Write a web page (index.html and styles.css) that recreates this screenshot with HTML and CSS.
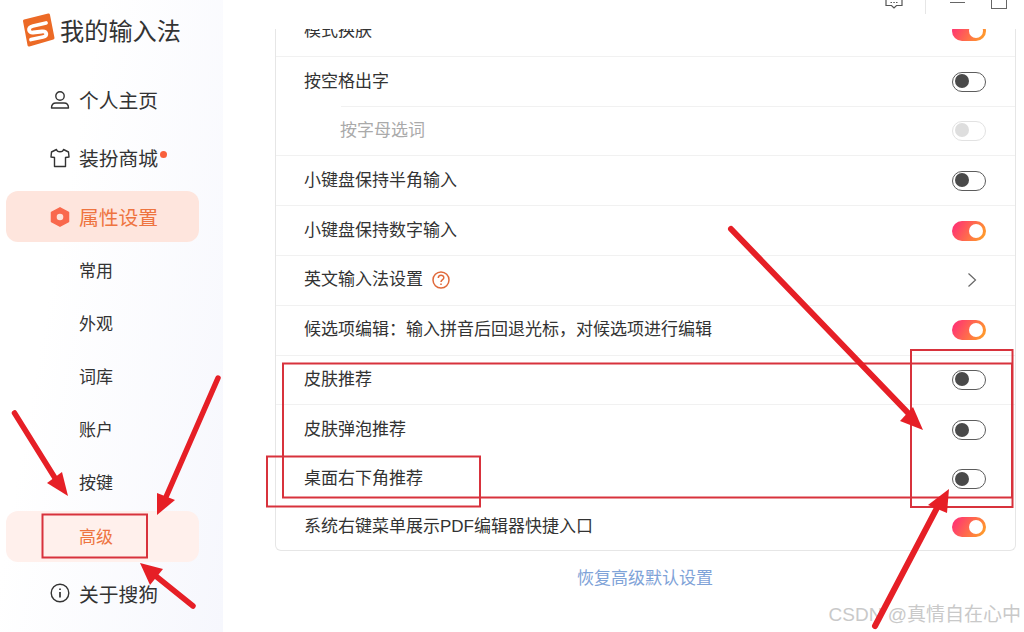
FILE: index.html
```html
<!DOCTYPE html>
<html lang="zh">
<head>
    <meta charset="UTF-8">
    <title>我的输入法</title>
    <link rel="stylesheet" href="styles.css">
</head>
<body>
    <div class="app">
        <aside class="sidebar">
            <div class="brand">
                <svg class="logo" width="34" height="34" viewBox="0 0 34 34">
                    <path d="M3.500 8 27.500 2 32 25 8 32z" fill="#ec6a26" stroke="#ec6a26" stroke-width="3" stroke-linejoin="round"/>
                    <path d="M25 10 12 13C6 14.500 7.500 20 12 19.500L21 18.500C26 18 27 23 22 24L10 26.500" fill="none" stroke="#fff" stroke-width="3.800" stroke-linecap="round"/>
                </svg>
                <span>我的输入法</span>
            </div>
            <nav class="nav">
                <a class="nav-item main-one">
                    <svg width="20" height="20" viewBox="0 0 20 20" fill="none" stroke="#333" stroke-width="1.400">
                        <circle cx="10" cy="6" r="4.200"/>
                        <path d="M1.500 18c0-3.500 2-5 4.500-5h8c2.500 0 4.500 1.500 4.500 5z" stroke-linejoin="round"/>
                    </svg>
                    <span>个人主页</span>
                </a>
                <a class="nav-item main-two">
                    <svg width="20" height="20" viewBox="0 0 20 20" fill="none" stroke="#333" stroke-width="1.400" stroke-linejoin="round">
                        <path d="M6.500 1.500 1.500 4 1 9l3.500.5V18.500h11V9.500L19 9l-.5-5-5-2.500C13 4.500 7 4.500 6.500 1.500z"/>
                    </svg>
                    <span>装扮商城</span>
                    <i class="dot"></i>
                </a>
                <a class="nav-item main-three active">
                    <svg width="20" height="20" viewBox="0 0 20 20">
                        <path d="M10 .8 18.500 5.400v9.200L10 19.200 1.500 14.600V5.400z" fill="#f9694d" stroke="#f9694d" stroke-width="1.500" stroke-linejoin="round"/>
                        <circle cx="10" cy="10" r="3.300" fill="#fde3da"/>
                    </svg>
                    <span>属性设置</span>
                </a>
                <a class="nav-item sub">常用</a>
                <a class="nav-item sub">外观</a>
                <a class="nav-item sub">词库</a>
                <a class="nav-item sub">账户</a>
                <a class="nav-item sub">按键</a>
                <a class="nav-item sub current">高级</a>
                <a class="nav-item about">
                    <svg width="20" height="20" viewBox="0 0 20 20" fill="none" stroke="#333" stroke-width="1.400">
                        <circle cx="10" cy="10" r="8.800"/>
                        <path d="M10 9v5.500M10 5.500v1.500" stroke-width="1.700"/>
                    </svg>
                    <span>关于搜狗</span>
                </a>
            </nav>
        </aside>

        <main class="content">
            <div class="titlebar">
                <svg class="tb-feedback" width="18" height="9" viewBox="0 0 18 9" fill="none" stroke="#555" stroke-width="1.200">
                    <path d="M1 0v5.500h5.500L9 8l2.500-2.500H17V0"/>
                    <path d="M5.500 2.500h1.500M8.300 2.500h1.500M11 2.500h1.500"/>
                </svg>
                <i class="tb-sep"></i>
                <i class="tb-min"></i>
                <i class="tb-max"></i>
            </div>

            <div class="card">
                <div class="row first">
                    <span>模式换肤</span>
                    <i class="toggle on"></i>
                </div>
                <div class="row short-line">
                    <span>按空格出字</span>
                    <i class="toggle"></i>
                </div>
                <div class="row indented">
                    <span>按字母选词</span>
                    <i class="toggle disabled"></i>
                </div>
                <div class="row">
                    <span>小键盘保持半角输入</span>
                    <i class="toggle"></i>
                </div>
                <div class="row">
                    <span>小键盘保持数字输入</span>
                    <i class="toggle on"></i>
                </div>
                <div class="row">
                    <span>英文输入法设置</span>
                    <svg class="help" width="18" height="18" viewBox="0 0 18 18" fill="none" stroke="#e0693a" stroke-width="1.500">
                        <circle cx="9" cy="9" r="8"/>
                        <path d="M6.300 7c0-3.500 5.500-3.500 5.500-.3 0 2-2.800 2-2.800 4.300M9 12.400v1.500"/>
                    </svg>
                    <svg class="chevron" width="10" height="16" viewBox="0 0 10 16" fill="none" stroke="#666" stroke-width="1.200">
                        <path d="M1.500 1.500 8.500 8l-7 6.500"/>
                    </svg>
                </div>
                <div class="row">
                    <span>候选项编辑：输入拼音后回退光标，对候选项进行编辑</span>
                    <i class="toggle on"></i>
                </div>
                <div class="row">
                    <span>皮肤推荐</span>
                    <i class="toggle"></i>
                </div>
                <div class="row plain">
                    <span>皮肤弹泡推荐</span>
                    <i class="toggle"></i>
                </div>
                <div class="row plain tight">
                    <span>桌面右下角推荐</span>
                    <i class="toggle"></i>
                </div>
                <div class="row plain tight">
                    <span>系统右键菜单展示PDF编辑器快捷入口</span>
                    <i class="toggle on"></i>
                </div>
            </div>

            <a class="reset">恢复高级默认设置</a>
        </main>
    </div>

    <div class="watermark">CSDN @真情自在心中</div>
    <!-- red markup drawn over the screenshot -->
    <svg class="marks" width="1024" height="632" viewBox="0 0 1024 632">
        <g fill="none" stroke="#d8323c" stroke-width="2">
            <rect x="283" y="363.500" width="729" height="134"/>
            <rect x="267" y="456.500" width="213" height="50"/>
            <rect x="911" y="350" width="101.500" height="157"/>
            <rect x="42.500" y="514.500" width="104.500" height="43"/>
        </g>
        <g fill="none" stroke="#e61f26" stroke-linecap="round">
            <path d="M731 229 911 416" stroke-width="6"/>
            <path d="M875 626 938 506" stroke-width="6"/>
            <path d="M14.500 413 55 478" stroke-width="5.500"/>
            <path d="M218 378 166 497" stroke-width="5.500"/>
            <path d="M193 606 152 573" stroke-width="5.500"/>
        </g>
        <g fill="#e61f26">
            <path d="M923 430 900 421 913 407z"/>
            <path d="M949 489 928 505 947 513z"/>
            <path d="M68 496 47 483 62 472z"/>
            <path d="M157 515 157 493 175 500z"/>
            <path d="M140 563 163 569 150 585z"/>
        </g>
    </svg>
</body>
</html>
```

FILE: styles.css
```css
* {
    box-sizing: border-box;
}
html, body {
    margin: 0;
    height: 632px;
    overflow: hidden;
}
body {
    position: relative;
    background: #fff;
    color: #333;
    font-family: "Liberation Sans", "Noto Sans CJK SC", sans-serif;
}
.app {
    display: flex;
    height: 632px;
}

/* sidebar */
.sidebar {
    width: 223px;
    flex: none;
    background: linear-gradient(100deg, #fff 30%, #f6f7fd 100%);
}
.brand {
    display: flex;
    align-items: flex-start;
    gap: 5px;
    height: 34px;
    margin: 13px 0 0 21px;
    font-size: 24.200px;
}
.brand span {
    padding-top: 3px;
    line-height: 32px;
    white-space: nowrap;
}
.logo {
    flex: none;
}
.nav {
    display: flex;
    flex-direction: column;
    margin: 0 24px 0 6px;
}
.nav-item {
    position: relative;
    display: flex;
    align-items: center;
    gap: 9px;
    height: 51px;
    padding-left: 44px;
    font-size: 19.800px;
    border-radius: 12px;
}
.nav-item.main-one {
    margin-top: 27px;
}
.nav-item.main-two {
    margin-top: 7px;
}
.nav-item.main-three {
    margin-top: 8px;
}
.nav-item.active {
    background: #fee5dd;
    color: #ee7440;
}
.nav-item.sub {
    height: 53.200px;
    padding-top: 1px;
    padding-left: 73px;
    font-size: 17px;
}
.nav-item.current {
    height: 51px;
    margin-top: 3px;
    padding-top: 0;
    padding-bottom: 2px;
    background: #fff0ec;
    color: #ee7440;
}
.nav-item.about {
    margin-top: 6px;
}
.dot {
    width: 7px;
    height: 7px;
    margin: -6px 0 0 -7px;
    border-radius: 50%;
    background: #f9603c;
}

/* main area */
.content {
    flex: 1;
    display: flex;
    flex-direction: column;
    padding: 0 8px 0 52px;
}
.titlebar {
    display: flex;
    align-items: flex-start;
    height: 29px;
    margin-right: -8px;
    padding-left: 610px;
}
.tb-sep {
    width: 1px;
    height: 14px;
    margin-left: 22px;
    background: #e6e6e6;
}
.tb-min {
    width: 15px;
    height: 1px;
    margin: 2px 0 0 24px;
    background: #666;
}
.tb-max {
    width: 16px;
    height: 9px;
    margin-left: 26px;
    border: 1px solid #666;
    border-top: none;
}
.card {
    height: 522px;
    overflow: hidden;
    border: 1px solid #e6e6e6;
    border-top: none;
    border-radius: 0 0 6px 6px;
}
.row {
    position: relative;
    display: flex;
    align-items: center;
    height: 49.800px;
    padding: 0 29px 0 28px;
    font-size: 17px;
    border-bottom: 1px solid #f1f1f1;
}
.row span {
    line-height: 24px;
}
.row.first {
    margin-top: -22px;
}
.row.short-line {
    border-bottom: none;
}
.row.short-line::after {
    content: "";
    position: absolute;
    left: 65px;
    right: 0;
    bottom: 0;
    height: 1px;
    background: #f1f1f1;
}
.row.indented {
    padding-left: 64px;
    color: #aaa;
}
.row.plain {
    border-bottom: none;
}
.row.tight {
    height: 48px;
}
.toggle {
    position: relative;
    flex: none;
    width: 34px;
    height: 20px;
    margin-left: auto;
    border: 1.500px solid #5c5c5c;
    border-radius: 10px;
}
.toggle::after {
    content: "";
    position: absolute;
    left: 1.500px;
    top: 1.500px;
    width: 14px;
    height: 14px;
    border-radius: 50%;
    background: #4a4a4a;
}
.toggle.on {
    border: none;
    background: linear-gradient(120deg, #ff3572 10%, #ff9a2c 90%);
}
.toggle.on::after {
    left: 17px;
    top: 3px;
    background: #fff;
}
.toggle.disabled {
    border-color: #e2e2e2;
}
.toggle.disabled::after {
    background: #dedede;
}
.help {
    margin-left: 9px;
}
.chevron {
    margin-left: auto;
    margin-right: 9px;
}
.reset {
    margin-top: 16px;
    padding-right: 1px;
    text-align: center;
    font-size: 17px;
    line-height: 24px;
    color: #7fa3d8;
}

/* overlays */
.marks {
    position: absolute;
    left: 0;
    top: 0;
}
.watermark {
    position: absolute;
    right: 3px;
    top: 603px;
    font-size: 19px;
    line-height: 24px;
    color: #c9c9c9;
    white-space: nowrap;
}
```
